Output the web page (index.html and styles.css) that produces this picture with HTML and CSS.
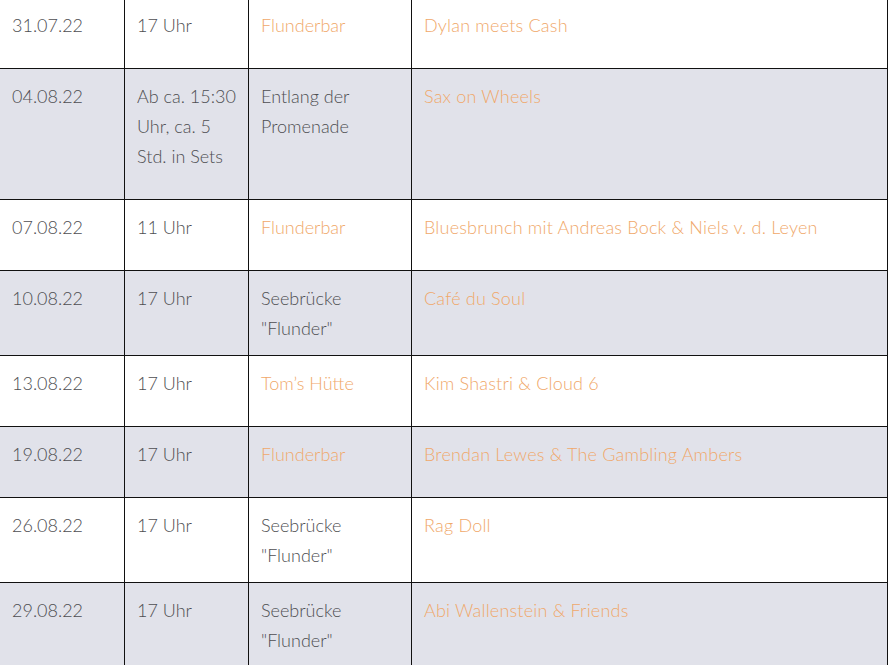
FILE: index.html
```html
<!DOCTYPE html>
<html lang="de">
<head>
<meta charset="utf-8">
<title>Termine</title>
<link rel="stylesheet" href="styles.css">
</head>
<body>
<div class="wrap">
<table class="events">
  <colgroup>
    <col class="c1"><col class="c2"><col class="c3"><col class="c4">
  </colgroup>
  <tbody>
    <tr>
      <td>31.07.22</td><td>17 Uhr</td><td><a href="#">Flunderbar</a></td><td><a href="#">Dylan meets Cash</a></td>
    </tr>
    <tr class="alt">
      <td>04.08.22</td><td>Ab ca. 15:30 Uhr, ca. 5 Std. in Sets</td><td class="nb">Entlang der Promenade</td><td><a href="#">Sax on Wheels</a></td>
    </tr>
    <tr>
      <td>07.08.22</td><td>11 Uhr</td><td><a href="#">Flunderbar</a></td><td><a href="#">Bluesbrunch mit Andreas Bock &amp; Niels v. d. Leyen</a></td>
    </tr>
    <tr class="alt">
      <td>10.08.22</td><td>17 Uhr</td><td class="nb">Seebrücke "Flunder"</td><td><a href="#">Café du Soul</a></td>
    </tr>
    <tr>
      <td>13.08.22</td><td>17 Uhr</td><td><a href="#">Tom’s Hütte</a></td><td><a href="#">Kim Shastri &amp; Cloud 6</a></td>
    </tr>
    <tr class="alt">
      <td>19.08.22</td><td>17 Uhr</td><td><a href="#">Flunderbar</a></td><td><a href="#">Brendan Lewes &amp; The Gambling Ambers</a></td>
    </tr>
    <tr>
      <td>26.08.22</td><td>17 Uhr</td><td class="nb">Seebrücke "Flunder"</td><td><a href="#">Rag Doll</a></td>
    </tr>
    <tr class="alt">
      <td>29.08.22</td><td>17 Uhr</td><td class="nb">Seebrücke "Flunder"</td><td><a href="#">Abi Wallenstein &amp; Friends</a></td>
    </tr>
  </tbody>
</table>
</div>
</body>
</html>
```

FILE: styles.css
```css
html, body {
  margin: 0;
  padding: 0;
  background: #ffffff;
  overflow: hidden;
}

.wrap {
  margin: -3px 0 0 -1px;
}

.events {
  border-collapse: collapse;
  width: 888px;
  table-layout: fixed;
  font-family: "Lato", "Liberation Sans", sans-serif;
  font-weight: 300;
  font-size: 18px;
  line-height: 30px;
  color: #4e4e52;
}

.c1 { width: 125px; }
.c2 { width: 124px; }
.c3 { width: 163px; }
.c4 { width: 476px; }

.events td {
  border: 1px solid #111111;
  padding: 12px 12px 28px 12px;
  vertical-align: top;
}

.events td:last-child {
  letter-spacing: 0.2px;
}

.events td.nb {
  padding-bottom: 12px;
}

.events tr.alt td {
  background: #e1e2ea;
}

.events a {
  color: #f0a86a;
  text-decoration: none;
}
```
